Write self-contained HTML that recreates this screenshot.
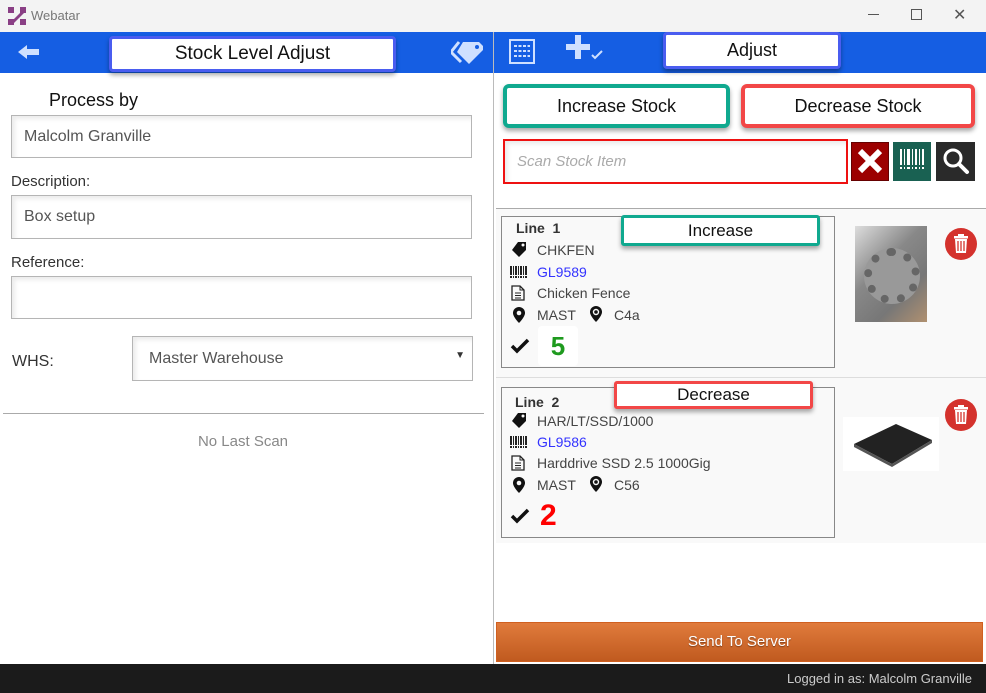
<!DOCTYPE html>
<html><head><style>
*{box-sizing:border-box;margin:0;padding:0}
body{width:986px;height:693px;overflow:hidden;background:#fff;font-family:"Liberation Sans",sans-serif;position:relative}
.a{position:absolute}
.lbl{font-size:15px;color:#333}
.inp{position:absolute;border:1px solid #b5b5b5;background:#fff;box-shadow:inset 3px 3px 4px rgba(0,0,0,.08);font-size:16px;color:#555;padding-left:12px;display:flex;align-items:center}
.btn{position:absolute;background:#fff;display:flex;align-items:center;justify-content:center;font-size:18px;color:#111;border-radius:4px;box-shadow:0 3px 5px rgba(0,0,0,.35)}
.card{position:absolute;border:1px solid #888;background:#f9f9f9}
.t{position:absolute;font-size:14px;color:#444}
.trash{position:absolute;width:32px;height:32px;border-radius:50%;background:#d4322d;box-shadow:0 1px 2px rgba(0,0,0,.4)}
</style></head><body>
<svg width="0" height="0" style="position:absolute"><defs>
<symbol id="tag" viewBox="0 0 16 16"><path d="M7 1h8v8l-7 7-7-7z" fill="#111" transform="rotate(0)"/><circle cx="12" cy="4" r="1.5" fill="#f9f9f9"/></symbol>
<symbol id="bar" viewBox="0 0 18 12"><g fill="#222"><rect x="0" y="0" width="2" height="12"/><rect x="3" y="0" width="1" height="12"/><rect x="5" y="0" width="2" height="12"/><rect x="8" y="0" width="1" height="12"/><rect x="10" y="0" width="2" height="12"/><rect x="13" y="0" width="1" height="12"/><rect x="15" y="0" width="2" height="12"/></g><rect x="0" y="9" width="18" height="1" fill="#f9f9f9"/></symbol>
<symbol id="doc" viewBox="0 0 14 16"><path d="M1 1h8l4 4v10H1z" fill="none" stroke="#222" stroke-width="1.3"/><path d="M9 1v4h4M4 8h6M4 10.5h6M4 13h6" stroke="#222" stroke-width="1" fill="none"/></symbol>
<symbol id="pin" viewBox="0 0 12 16"><path d="M6 0a6 6 0 0 0-6 6c0 4 6 10 6 10s6-6 6-10a6 6 0 0 0-6-6z" fill="#111"/><circle cx="6" cy="6" r="2.3" fill="#f9f9f9"/></symbol>
<symbol id="pin2" viewBox="0 0 12 16"><path d="M6 0a6 6 0 0 0-6 6c0 4 6 10 6 10s6-6 6-10a6 6 0 0 0-6-6z" fill="#111"/><circle cx="6" cy="6" r="3.2" fill="#f9f9f9"/><circle cx="6" cy="6" r="1.8" fill="#111"/></symbol>
<symbol id="trash" viewBox="0 0 32 32"><circle cx="16" cy="16" r="16" fill="#d4322d"/><rect x="9" y="8" width="14" height="2.5" fill="#fff"/><rect x="13" y="6" width="6" height="2" fill="#fff"/><path d="M10 11h12l-1 14H11z" fill="#fff"/><path d="M13 13v10M16 13v10M19 13v10" stroke="#d4322d" stroke-width="1.3"/></symbol>
</defs></svg>
<!-- title bar -->
<div class="a" style="left:0;top:0;width:986px;height:32px;background:#f3f3f3"></div>
<svg class="a" style="left:8px;top:7px" width="18" height="18" viewBox="0 0 18 18"><g fill="#8a3f85"><rect x="0" y="0" width="6" height="6"/><rect x="12" y="0" width="6" height="6"/><rect x="0" y="12" width="6" height="6"/><rect x="12" y="12" width="6" height="6"/><path d="M4 14L14 4l2 2L6 16z"/></g></svg>
<div class="a" style="left:31px;top:8px;font-size:13px;color:#777">Webatar</div>
<div class="a" style="left:868px;top:14px;width:11px;height:1px;background:#555"></div>
<div class="a" style="left:911px;top:9px;width:11px;height:11px;border:1px solid #555"></div>
<div class="a" style="left:953px;top:5px;font-size:16px;color:#555">✕</div>
<!-- blue bar -->
<div class="a" style="left:0;top:32px;width:986px;height:41px;background:#155ee3"></div>
<div class="a" style="left:493px;top:32px;width:1px;height:632px;background:#bbb"></div>
<svg class="a" style="left:18px;top:44px" width="22" height="16" viewBox="0 0 22 16"><path d="M0 8L9 1v4h12v6H9v4z" fill="#cfe0ff"/></svg>
<div class="btn" style="left:109px;top:36px;width:287px;height:36px;border:3px solid #4a5df0;font-size:19px">Stock Level Adjust</div>
<svg class="a" style="left:451px;top:38px" width="34" height="28" viewBox="0 0 34 28"><path d="M12 4h16l4 4v4L18 26 6 14z" fill="#cfe0ff"/><circle cx="26" cy="9" r="2" fill="#155ee3"/><path d="M8 4L0 14l10 10" stroke="#cfe0ff" stroke-width="3" fill="none"/></svg>
<svg class="a" style="left:509px;top:39px" width="26" height="25" viewBox="0 0 26 25"><rect x="1" y="1" width="24" height="23" fill="none" stroke="#cfe0ff" stroke-width="2"/><g stroke="#cfe0ff" stroke-width="2" stroke-dasharray="3 1.5"><line x1="5" y1="7" x2="21" y2="7"/><line x1="5" y1="12" x2="21" y2="12"/><line x1="5" y1="17" x2="21" y2="17"/></g></svg>
<div class="a" style="left:566px;top:44px;width:24px;height:6px;background:#cfe0ff"></div>
<div class="a" style="left:575px;top:35px;width:6px;height:24px;background:#cfe0ff"></div>
<svg class="a" style="left:591px;top:50px" width="12" height="10"><path d="M1 5l3 3 7-7" stroke="#cfe0ff" stroke-width="2" fill="none"/></svg>
<div class="btn" style="left:663px;top:32px;width:178px;height:37px;border:3px solid #4a5df0;font-size:18px">Adjust</div>
<!-- left panel -->
<div class="a" style="left:49px;top:90px;font-size:18px;color:#111">Process by</div>
<div class="inp" style="left:11px;top:115px;width:461px;height:43px">Malcolm Granville</div>
<div class="a lbl" style="left:11px;top:173px">Description:</div>
<div class="inp" style="left:11px;top:195px;width:461px;height:44px">Box setup</div>
<div class="a lbl" style="left:11px;top:254px">Reference:</div>
<div class="inp" style="left:11px;top:276px;width:461px;height:43px"></div>
<div class="a" style="left:12px;top:353px;font-size:16px;color:#333">WHS:</div>
<div class="inp" style="left:132px;top:336px;width:341px;height:45px;padding-left:16px">Master Warehouse<span style="position:absolute;right:7px;top:13px;font-size:10px;color:#333">▼</span></div>
<div class="a" style="left:3px;top:413px;width:481px;height:1px;background:#aaa"></div>
<div class="a" style="left:0;top:433px;width:486px;text-align:center;font-size:15px;color:#888">No Last Scan</div>
<!-- right controls -->
<div class="btn" style="left:503px;top:84px;width:227px;height:44px;border:4px solid #10a98f;border-radius:6px">Increase Stock</div>
<div class="btn" style="left:741px;top:84px;width:234px;height:44px;border:4px solid #f24747;border-radius:6px">Decrease Stock</div>
<div class="inp" style="left:503px;top:139px;width:345px;height:45px;border:2px solid #e11;font-style:italic;color:#aaa;font-size:15px">Scan Stock Item</div>
<div class="a" style="left:851px;top:142px;width:38px;height:39px;background:#9c0000;border:1px solid #600"></div>
<svg class="a" style="left:856px;top:147px" width="28" height="28"><path d="M4 4L24 24M24 4L4 24" stroke="#fff" stroke-width="6"/></svg>
<div class="a" style="left:893px;top:142px;width:38px;height:39px;background:#196152"></div>
<svg class="a" style="left:899px;top:149px" width="26" height="24"><g fill="#fff"><rect x="1" y="0" width="2" height="20"/><rect x="5" y="0" width="1" height="20"/><rect x="8" y="0" width="3" height="20"/><rect x="13" y="0" width="1" height="20"/><rect x="16" y="0" width="2" height="20"/><rect x="20" y="0" width="1" height="20"/><rect x="23" y="0" width="2" height="20"/></g><rect x="0" y="16" width="26" height="2" fill="#196152"/></svg>
<div class="a" style="left:936px;top:142px;width:39px;height:39px;background:#2a2a2a"></div>
<svg class="a" style="left:941px;top:146px" width="30" height="30"><circle cx="12" cy="12" r="8" stroke="#fff" stroke-width="3" fill="none"/><path d="M18 18l8 8" stroke="#fff" stroke-width="4" stroke-linecap="round"/></svg>
<!-- list -->
<div class="a" style="left:496px;top:208px;width:490px;height:1px;background:#aaa"></div>
<div class="a" style="left:496px;top:209px;width:490px;height:334px;background:#f9f9f9"></div>
<div class="a" style="left:496px;top:543px;width:479px;height:77px;background:#fff"></div>
<div class="a" style="left:496px;top:377px;width:490px;height:1px;background:#ddd"></div>

<div class="card" style="left:501px;top:216px;width:334px;height:152px"></div>
<div class="t" style="left:516px;top:220px;font-weight:bold;color:#333">Line&nbsp;&nbsp;1</div>
<div class="btn" style="left:621px;top:215px;width:199px;height:31px;border:3px solid #10a98f;border-radius:3px;font-size:17px">Increase</div>
<svg class="a" style="left:511px;top:241px" width="16" height="16"><use href="#tag"/></svg>
<div class="t" style="left:537px;top:242px">CHKFEN</div>
<svg class="a" style="left:510px;top:266px" width="18" height="12"><use href="#bar"/></svg>
<div class="t" style="left:537px;top:264px;color:#33f">GL9589</div>
<svg class="a" style="left:511px;top:285px" width="14" height="16"><use href="#doc"/></svg>
<div class="t" style="left:537px;top:285px">Chicken Fence</div>
<svg class="a" style="left:513px;top:307px" width="12" height="16"><use href="#pin"/></svg>
<div class="t" style="left:537px;top:307px">MAST</div>
<svg class="a" style="left:590px;top:306px" width="12" height="16"><use href="#pin2"/></svg>
<div class="t" style="left:614px;top:307px">C4a</div>
<svg class="a" style="left:510px;top:338px" width="20" height="16"><path d="M2 8l5 5 11-11" stroke="#111" stroke-width="3.5" fill="none"/></svg>
<div class="a" style="left:538px;top:326px;width:40px;height:40px;background:#fff;border-radius:4px;font-size:26px;color:#1e9a1e;font-weight:bold;text-align:center;line-height:40px">5</div>
<div class="a" style="left:855px;top:226px;width:72px;height:96px;background:linear-gradient(135deg,#ddd,#888 40%,#777 70%,#b09070)"></div>
<div class="a" style="left:864px;top:248px;width:56px;height:56px;border-radius:50%;border:8px dotted #666;background:#999"></div>
<svg class="a" style="left:945px;top:228px" width="32" height="32"><use href="#trash"/></svg>

<div class="card" style="left:501px;top:387px;width:334px;height:151px"></div>
<div class="t" style="left:515px;top:394px;font-weight:bold;color:#333">Line&nbsp;&nbsp;2</div>
<div class="btn" style="left:614px;top:381px;width:199px;height:28px;border:3px solid #f24747;border-radius:3px;font-size:17px">Decrease</div>
<svg class="a" style="left:511px;top:412px" width="16" height="16"><use href="#tag"/></svg>
<div class="t" style="left:537px;top:413px">HAR/LT/SSD/1000</div>
<svg class="a" style="left:510px;top:436px" width="18" height="12"><use href="#bar"/></svg>
<div class="t" style="left:537px;top:434px;color:#33f">GL9586</div>
<svg class="a" style="left:511px;top:455px" width="14" height="16"><use href="#doc"/></svg>
<div class="t" style="left:537px;top:455px">Harddrive SSD 2.5 1000Gig</div>
<svg class="a" style="left:513px;top:477px" width="12" height="16"><use href="#pin"/></svg>
<div class="t" style="left:537px;top:477px">MAST</div>
<svg class="a" style="left:590px;top:476px" width="12" height="16"><use href="#pin2"/></svg>
<div class="t" style="left:614px;top:477px">C56</div>
<svg class="a" style="left:510px;top:508px" width="20" height="16"><path d="M2 8l5 5 11-11" stroke="#111" stroke-width="3.5" fill="none"/></svg>
<div class="a" style="left:540px;top:499px;font-size:30px;color:#f00;font-weight:bold">2</div>
<div class="a" style="left:843px;top:417px;width:96px;height:54px;background:#fff"></div>
<svg class="a" style="left:846px;top:420px" width="90" height="48"><path d="M8 24L50 4l36 16-40 24z" fill="#222"/><path d="M8 24l38 20 40-24v3L46 47 8 27z" fill="#555"/></svg>
<svg class="a" style="left:945px;top:399px" width="32" height="32"><use href="#trash"/></svg>

<div class="a" style="left:496px;top:622px;width:487px;height:40px;background:linear-gradient(#e07b3c,#c05a1f);border:1px solid #d06020;color:#fff;font-size:15px;text-align:center;line-height:38px;text-shadow:0 1px 1px rgba(0,0,0,.4)">Send To Server</div>
<div class="a" style="left:0;top:664px;width:986px;height:29px;background:#1b1b1b"></div>
<div class="a" style="right:14px;top:671px;font-size:13px;color:#ccc">Logged in as: Malcolm Granville</div>
</body></html>
